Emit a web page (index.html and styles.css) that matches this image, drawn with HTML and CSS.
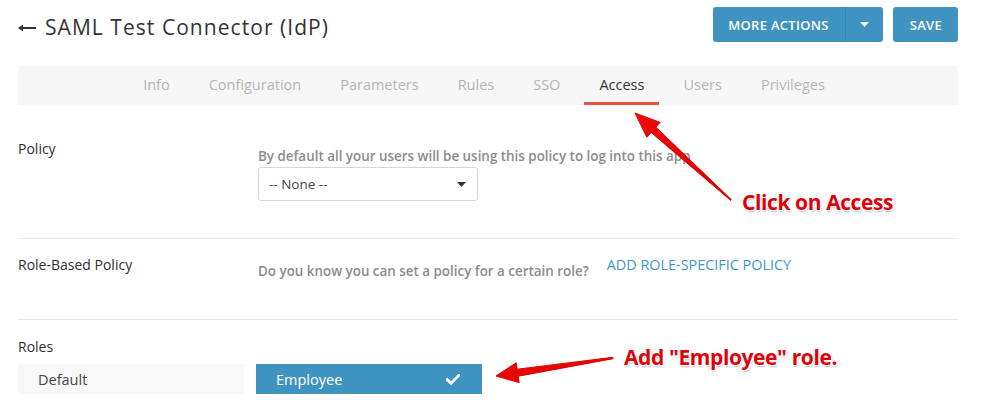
FILE: index.html
```html
<!DOCTYPE html>
<html>
<head>
<meta charset="utf-8">
<link rel="stylesheet" href="styles.css">
</head>
<body>
<div class="page">
  <header class="header">
    <h1 class="title"><svg class="back" width="18" height="8" viewBox="0 0 18 8"><path d="M1 4H18" stroke="#333" stroke-width="2"/><path d="M0 4L5 0.5V7.5Z" fill="#333"/></svg>SAML Test Connector (IdP)</h1>
    <div class="actions">
      <div class="split-btn">
        <span class="split-main">MORE ACTIONS</span>
        <span class="split-caret"><svg width="9" height="5" viewBox="0 0 9 5"><path d="M0 0h9L4.5 5z" fill="#fff"/></svg></span>
      </div>
      <span class="btn">SAVE</span>
    </div>
  </header>

  <nav class="tabs">
    <span class="tab">Info</span>
    <span class="tab">Configuration</span>
    <span class="tab">Parameters</span>
    <span class="tab">Rules</span>
    <span class="tab">SSO</span>
    <span class="tab active">Access</span>
    <span class="tab">Users</span>
    <span class="tab">Privileges</span>
  </nav>

  <section class="row row-policy">
    <div class="label">Policy</div>
    <div class="content">
      <p class="desc">By default all your users will be using this policy to log into this app</p>
      <div class="select"><span>-- None --</span><svg width="9" height="5" viewBox="0 0 9 5"><path d="M0 0h9L4.5 5z" fill="#333"/></svg></div>
    </div>
  </section>

  <section class="row row-role">
    <div class="label">Role-Based Policy</div>
    <div class="content inline">
      <p class="desc">Do you know you can set a policy for a certain role?</p>
      <span class="link">ADD ROLE-SPECIFIC POLICY</span>
    </div>
  </section>

  <section class="row row-roles">
    <div class="label">Roles</div>
    <div class="roles">
      <div class="role">Default</div>
      <div class="role selected"><span>Employee</span><svg width="14" height="11" viewBox="0 0 14 11"><path d="M1.2 5.6 L5 9.2 L12.8 1.4" fill="none" stroke="#fff" stroke-width="2.8" stroke-linecap="square"/></svg></div>
    </div>
  </section>
</div>

<svg class="annot" width="986" height="418" viewBox="0 0 986 418">
  <defs>
    <linearGradient id="g1" x1="0" y1="0" x2="1" y2="1">
      <stop offset="0" stop-color="#f00a0a"/>
      <stop offset="1" stop-color="#d60000"/>
    </linearGradient>
  </defs>
  <polygon points="635,113 660.2,122.4 655.9,127.2 731.3,199.6 730.7,200.4 651.1,132.4 646.8,137.2" fill="url(#g1)" stroke="#e00000" stroke-width="1" stroke-linejoin="round"/>
  <polygon points="496,376 516.2,362.8 517.2,369.2 612.9,357.3 613.1,358.7 518.2,376.2 519.2,382.6" fill="url(#g1)" stroke="#e00000" stroke-width="1" stroke-linejoin="round"/>
</svg>
<div class="note note-access">Click on Access</div>
<div class="note note-role">Add "Employee" role.</div>
</body>
</html>
```
FILE: styles.css
```css
* { box-sizing: border-box; }
html, body { margin: 0; padding: 0; background: #fff; }
body {
  font-family: "Open Sans", "Noto Sans", sans-serif;
  color: #333;
  width: 986px;
  height: 418px;
  overflow: hidden;
  position: relative;
}
.page { padding: 7px 28px 0 18px; }

.header {
  display: flex;
  justify-content: space-between;
  align-items: center;
  height: 35px;
}
.title {
  margin: 4px 0 0 0;
  font-size: 21px;
  font-weight: 400;
  color: #333;
  display: flex;
  align-items: center;
  letter-spacing: 1.05px;
}
.back { margin-right: 9px; margin-top: 3px; }
.actions { display: flex; gap: 10px; }
.split-btn {
  display: flex;
  height: 35px;
  background: #3f93c1;
  border-radius: 3px;
  color: #fff;
}
.split-main {
  display: flex; align-items: center;
  padding: 0 16px 0 15px;
  font-size: 13px;
  font-weight: 600;
  letter-spacing: 0.3px;
  border-right: 1px solid #3785b0;
}
.split-caret { width: 37px; display: flex; align-items: center; justify-content: center; }
.btn {
  display: flex; align-items: center;
  height: 35px;
  padding: 0 16px 0 17px;
  background: #3f93c1;
  border-radius: 3px;
  color: #fff;
  font-size: 13px;
  font-weight: 600;
  letter-spacing: 0.3px;
}

.tabs {
  margin-top: 24px;
  height: 39px;
  background: #f7f7f7;
  display: flex;
  justify-content: center;
  gap: 9px;
  padding-right: 8px;
}
.tab {
  padding: 0 15px;
  display: flex;
  align-items: center;
  font-size: 14.5px;
  color: #b5b5b5;
  border-bottom: 3px solid transparent;
}
.tab.active { color: #333; border-bottom-color: #e8503f; }

.row {
  display: grid;
  grid-template-columns: 240px 1fr;
  border-bottom: 1px solid #e6e6e6;
}
.label { font-size: 14px; font-weight: 500; line-height: 20px; color: #2e2e2e; }
.desc { margin: 0; font-size: 13.4px; line-height: 16px; color: #8c8c8c; font-weight: 600; }

.row-policy { padding: 34px 0 37px; }
.row-policy .desc { margin-top: 9px; }
.select {
  margin-top: 3px;
  width: 220px;
  height: 34px;
  border: 1px solid #d6d6d6;
  border-radius: 3px;
  display: flex;
  align-items: center;
  justify-content: space-between;
  padding: 0 11px 0 10px;
  font-size: 13.5px;
  color: #444;
}

.row-role { padding: 16px 0 40px; }
.inline { display: flex; align-items: flex-start; gap: 18px; }
.row-role .desc { margin-top: 8px; }
.link { font-size: 14.4px; color: #3f97c5; line-height: 20px; }

.row-roles { border-bottom: none; padding-top: 17px; display: block; }
.roles { display: flex; gap: 12px; margin-top: 7px; }
.role {
  width: 226px;
  height: 30px;
  background: #f8f8f8;
  display: flex;
  align-items: center;
  padding: 0 20px;
  font-size: 14.5px;
  color: #444;
}
.role.selected { background: #3f93c0; color: #fff; justify-content: space-between; padding-right: 22px; }

.annot { position: absolute; left: 0; top: 0; pointer-events: none; }
.note {
  position: absolute;
  font-family: "Open Sans", "Noto Sans", sans-serif;
  font-weight: 700;
  font-size: 21px;
  color: #e00008;
  letter-spacing: -0.4px;
  white-space: nowrap;
  text-shadow: 1px 1px 0 #fff, -1px -1px 0 #fff, 1px -1px 0 #fff, -1px 1px 0 #fff, 1px 2px 2px rgba(0,0,0,0.25);
  line-height: 24px;
}
.note-access { left: 742px; top: 190px; }
.note-role { left: 624px; top: 345px; }
```
